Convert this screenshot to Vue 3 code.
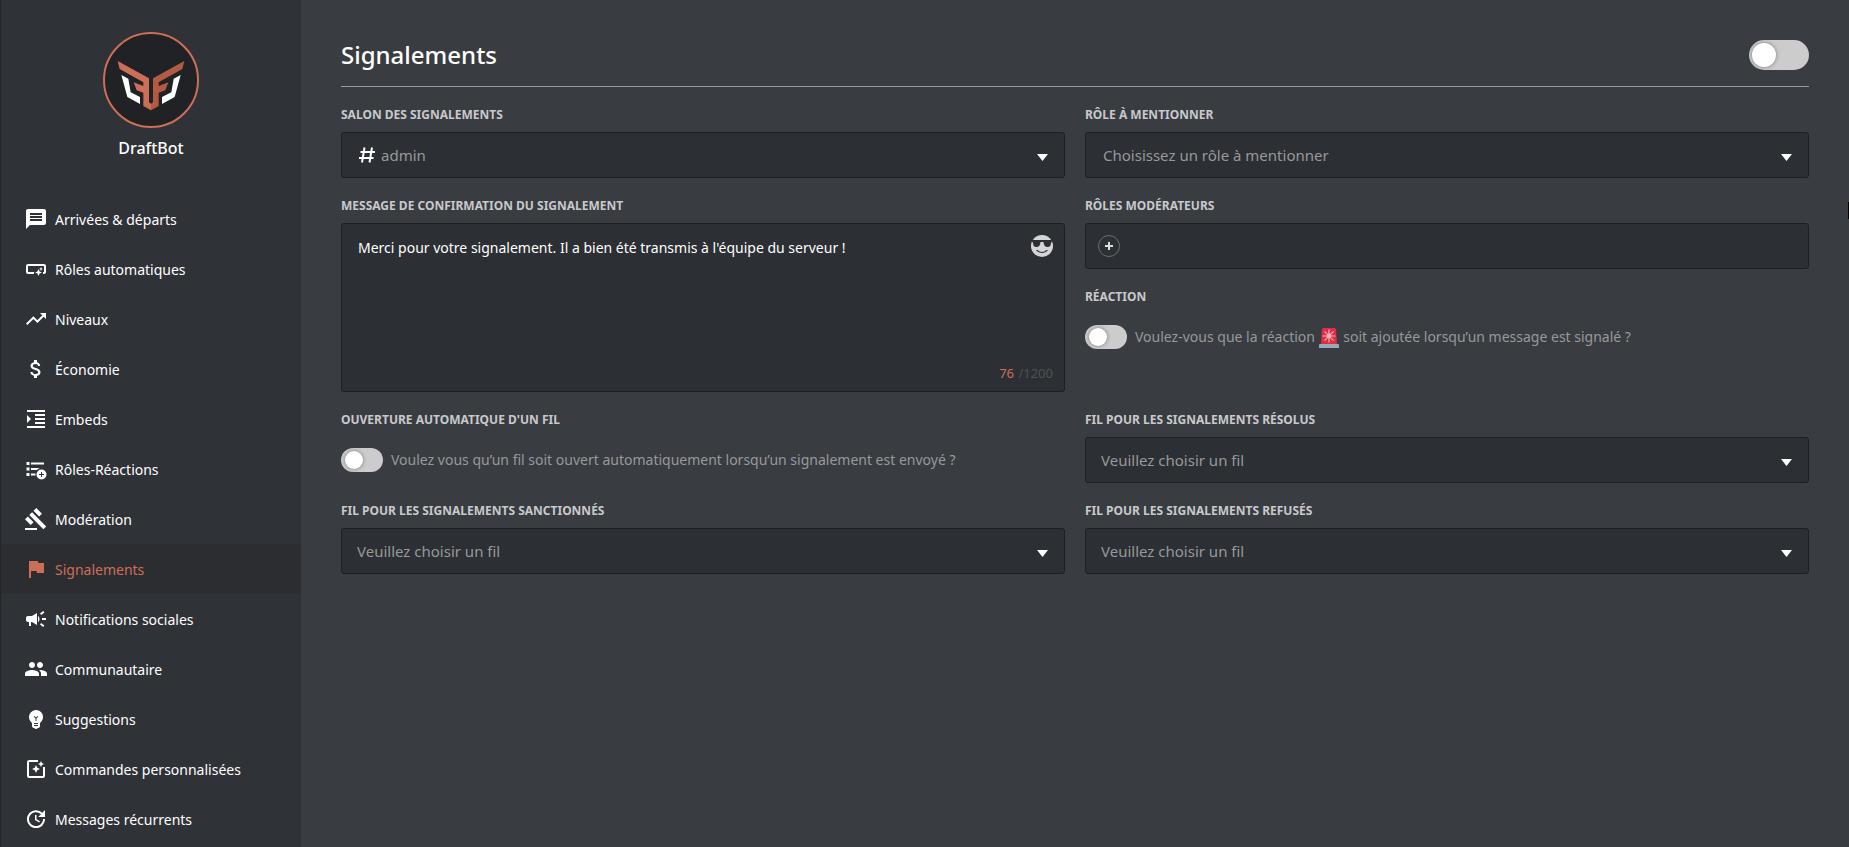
<template>
  <div class="layout">
    <aside class="sidebar">
      <div class="brand">
        <svg class="brand-logo" viewBox="0 0 288 288" aria-hidden="true">
          <circle cx="144" cy="144" r="141" fill="#202225" stroke="#cd6e57" stroke-width="6" />
          <path fill="#cd6e57" d="M44 87 138 139V211L144 215V235L121 222V182L101 175 92 151 121 162V151L50 111z" />
          <path fill="#b35a43" d="M244 87 150 139V211L144 215V235L167 222V182L187 175 196 151 167 162V151L238 111z" />
          <path fill="#ffffff" d="M55 129 76 140 83 181 111 195V216L73 195zM233 129 212 140 205 181 177 195V216L215 195z" />
        </svg>
        <span class="brand-name">DraftBot</span>
      </div>
      <nav>
        <a
          v-for="item in menu"
          :key="item.label"
          href="#"
          class="menu-item"
          :class="{ active: item.label === current }"
          @click.prevent="current = item.label"
        >
          <svg class="menu-icon" viewBox="0 0 24 24" aria-hidden="true">
            <path :d="item.icon" fill-rule="evenodd" />
          </svg>
          <span>{{ item.label }}</span>
        </a>
      </nav>
    </aside>

    <main class="content">
      <header class="header">
        <h1 class="title">Signalements</h1>
        <input v-model="enabled" type="checkbox" class="switch large" aria-label="Activer les signalements" />
      </header>

      <form class="form" @submit.prevent>
        <div class="field">
          <label class="label" for="channel">Salon des signalements</label>
          <div class="select-box">
            <svg class="hash" viewBox="0 0 16 16" aria-hidden="true">
              <path d="M5.5 0.5 3 15.5M13 0.5 10.5 15.5M1.5 5H16M0 11H14.5" />
            </svg>
            <select id="channel" v-model="channel" class="select with-icon">
              <option value="admin">admin</option>
            </select>
          </div>
        </div>

        <div class="field">
          <label class="label" for="mention">Rôle à mentionner</label>
          <div class="select-box">
            <select id="mention" v-model="mention" class="select wide">
              <option value="">Choisissez un rôle à mentionner</option>
            </select>
          </div>
        </div>

        <div class="field">
          <label class="label" for="message">Message de confirmation du signalement</label>
          <div class="message-box">
            <textarea id="message" v-model="message" class="message" maxlength="1200"></textarea>
            <button type="button" class="emoji-button" aria-label="Ajouter un emoji">
              <svg viewBox="0 0 22 22" aria-hidden="true">
                <circle cx="11" cy="11" r="11" fill="#d4d5d6" />
                <path fill="#2c2f33" d="M1 5H21V7L20 7.5C20 10.5 19 12 16.5 12 14 12 12.8 10.5 12.5 7H9.5C9.2 10.5 8 12 5.5 12 3 12 2 10.5 2 7.5L1 7z" />
                <path fill="none" stroke="#2c2f33" stroke-width="1.2" stroke-linecap="round" d="M6 15.5Q11 19.5 16 15.5" />
              </svg>
            </button>
            <p class="counter"><span class="count">{{ count }}</span> /1200</p>
          </div>
        </div>

        <div class="stack">
          <div class="field">
            <span class="label">Rôles modérateurs</span>
            <div class="roles-box">
              <button type="button" class="add-button" aria-label="Ajouter un rôle">
                <svg viewBox="0 0 8 8" aria-hidden="true"><path d="M4 0V8M0 4H8" /></svg>
              </button>
            </div>
          </div>
          <div class="field">
            <span class="label">Réaction</span>
            <div class="switch-row">
              <input id="reaction" v-model="reaction" type="checkbox" class="switch" />
              <label for="reaction">
                Voulez-vous que la réaction
                <svg class="siren" viewBox="0 0 20 20" role="img" aria-label="gyrophare">
                  <path fill="#dd2e44" d="M2 17 3 1.5Q3.1 0 4.5 0H15.5Q16.900 0 17 1.5L18 17z" />
                  <path stroke="#f4abba" stroke-width="1.2" d="M10 1.5V14.5M3.5 8H16.5M5.400 3.400 14.6 12.6M14.6 3.400 5.400 12.6" />
                  <circle cx="10" cy="8" r="2.4" fill="#f4abba" />
                  <path fill="#99aab5" d="M0 17Q0 16 1 16H19Q20 16 20 17V20H0z" />
                </svg>
                soit ajoutée lorsqu’un message est signalé ?
              </label>
            </div>
          </div>
        </div>

        <div class="field">
          <span class="label">Ouverture automatique d'un fil</span>
          <div class="switch-row">
            <input id="thread" v-model="autoThread" type="checkbox" class="switch" />
            <label for="thread">Voulez vous qu’un fil soit ouvert automatiquement lorsqu’un signalement est envoyé ?</label>
          </div>
        </div>

        <div v-for="thread in threads" :key="thread.id" class="field">
          <label class="label" :for="thread.id">{{ thread.label }}</label>
          <div class="select-box">
            <select :id="thread.id" v-model="thread.value" class="select">
              <option value="">Veuillez choisir un fil</option>
            </select>
          </div>
        </div>
      </form>
    </main>
    <span class="edge-mark"></span>
  </div>
</template>

<script setup>
import { computed, ref } from 'vue'

const current = ref('Signalements')
const enabled = ref(false)
const channel = ref('admin')
const mention = ref('')
const message = ref("Merci pour votre signalement. Il a bien été transmis à l'équipe du serveur !")
const reaction = ref(false)
const autoThread = ref(false)

const count = computed(() => message.value.length)

const threads = ref([
  { id: 'resolved', label: 'Fil pour les signalements résolus', value: '' },
  { id: 'sanctioned', label: 'Fil pour les signalements sanctionnés', value: '' },
  { id: 'refused', label: 'Fil pour les signalements refusés', value: '' },
])

const menu = [
  {
    label: 'Arrivées & départs',
    icon: 'M20 2H4c-1.1 0-1.99.9-1.99 2L2 22l4-4h14c1.1 0 2-.9 2-2V4c0-1.1-.9-2-2-2zm-2 12H6v-2h12v2zm0-3H6V9h12v2zm0-3H6V6h12v2z',
  },
  {
    label: 'Rôles automatiques',
    icon: 'M22 9v6c0 1.1-.9 2-2 2h-1v-2h1V9H4v6h6v2H4c-1.1 0-2-.9-2-2V9c0-1.1.9-2 2-2h16c1.1 0 2 .9 2 2zm-7.5 10l1.09-2.41L18 15.5l-2.41-1.09L14.5 12l-1.09 2.41L11 15.5l2.41 1.09L14.5 19zm2.5-5l.62-1.38L19 12l-1.38-.62L17 10l-.62 1.38L15 12l1.38.62L17 14z',
  },
  {
    label: 'Niveaux',
    icon: 'M16 6l2.29 2.29-4.88 4.88-4-4L2 16.59 3.41 18l6-6 4 4 6.3-6.29L22 12V6z',
  },
  {
    label: 'Économie',
    icon: 'M11.8 10.9c-2.27-.59-3-1.2-3-2.15 0-1.09 1.01-1.85 2.7-1.85 1.78 0 2.44.85 2.5 2.1h2.21c-.07-1.72-1.12-3.3-3.21-3.81V3h-3v2.16c-1.94.42-3.5 1.68-3.5 3.61 0 2.31 1.91 3.46 4.7 4.13 2.5.6 3 1.48 3 2.41 0 .69-.49 1.79-2.7 1.79-2.06 0-2.87-.92-2.98-2.1h-2.2c.12 2.19 1.76 3.42 3.68 3.83V21h3v-2.15c1.95-.37 3.5-1.5 3.5-3.55 0-2.84-2.43-3.81-4.7-4.4z',
  },
  {
    label: 'Embeds',
    icon: 'M3 21h18v-2H3v2zM3 8v8l4-4-4-4zm8 9h10v-2H11v2zM3 3v2h18V3H3zm8 6h10V7H11v2zm0 4h10v-2H11v2z',
  },
  {
    label: 'Rôles-Réactions',
    icon: 'M2.5 5h3v3h-3zM7 5.5h13v2H7zM2.5 10.5h3v3h-3zM7 11h9a6 6 0 0 0-3 2H7zM2.5 16h3v3h-3zM7 16.5h4.5v2H7zM17.5 12.5a5 5 0 1 1 0 10a5 5 0 1 1 0-10zM17 15v2h-2v1h2v2h1v-2h2v-1h-2v-2z',
  },
  {
    label: 'Modération',
    icon: 'M1 21h12v2H1zM5.245 8.07l2.83-2.827 14.14 14.142-2.828 2.828zM12.317 1l5.657 5.656-2.83 2.83-5.654-5.66zM3.825 9.485l5.657 5.657-2.828 2.828-5.657-5.657z',
  },
  {
    label: 'Signalements',
    icon: 'M14.4 6L14 4H5v17h2v-7h5.6l.4 2h7V6z',
  },
  {
    label: 'Notifications sociales',
    icon: 'M18 11v2h4v-2h-4zm-2 6.61c.96.71 2.21 1.65 3.2 2.39.4-.53.8-1.07 1.2-1.6-.99-.74-2.24-1.68-3.2-2.4-.4.54-.8 1.08-1.2 1.61zM20.4 5.6c-.4-.53-.8-1.07-1.2-1.6-.99.74-2.24 1.68-3.2 2.4.4.53.8 1.07 1.2 1.6.96-.72 2.21-1.65 3.2-2.4zM4 9c-1.1 0-2 .9-2 2v2c0 1.1.9 2 2 2h1v4h2v-4h1l5 3V6L8 9H4zm11.5 3c0-1.33-.58-2.53-1.5-3.35v6.69c.92-.81 1.5-2.01 1.5-3.34z',
  },
  {
    label: 'Communautaire',
    icon: 'M16 11c1.66 0 2.99-1.34 2.99-3S17.66 5 16 5c-1.66 0-3 1.34-3 3s1.34 3 3 3zm-8 0c1.66 0 2.99-1.34 2.99-3S9.66 5 8 5C6.34 5 5 6.34 5 8s1.34 3 3 3zm0 2c-2.33 0-7 1.17-7 3.5V19h14v-2.5c0-2.33-4.67-3.5-7-3.5zm8 0c-.29 0-.62.02-.97.05 1.16.84 1.97 1.97 1.97 3.45V19h6v-2.5c0-2.33-4.67-3.5-7-3.5z',
  },
  {
    label: 'Suggestions',
    icon: 'M12 3c-.46 0-.93.04-1.4.14C7.84 3.67 5.64 5.9 5.12 8.66c-.48 2.61.48 5.01 2.22 6.56.43.38.66.91.66 1.47V19c0 1.1.9 2 2 2h.28c.35.6.98 1 1.72 1s1.38-.4 1.72-1H14c1.1 0 2-.9 2-2v-2.31c0-.55.22-1.09.64-1.46C18.09 13.95 19 12.08 19 10c0-3.87-3.13-7-7-7zm2 16h-4v-1h4v1zm0-2h-4v-1h4v1zm-1.5-5.59V14h-1v-2.59L9.67 9.59l.71-.71L12 10.5l1.62-1.62.71.71-1.83 1.82z',
  },
  {
    label: 'Commandes personnalisées',
    icon: 'M19.02 10v9H5V5h9V3H5.02c-1.1 0-2 .9-2 2v14c0 1.1.9 2 2 2H19c1.1 0 2-.9 2-2v-9h-1.98zM17 10l.94-2.06L20 7l-2.06-.94L17 4l-.94 2.06L14 7l2.06.94zM13.25 10.75L12 8l-1.25 2.75L8 12l2.75 1.25L12 16l1.25-2.75L16 12z',
  },
  {
    label: 'Messages récurrents',
    icon: 'M21 10.12h-6.78l2.74-2.82c-2.73-2.7-7.15-2.8-9.88-.1-2.73 2.71-2.73 7.08 0 9.79s7.15 2.71 9.88 0C18.32 15.65 19 14.08 19 12.1h2c0 1.98-.88 4.55-2.64 6.29-3.51 3.48-9.21 3.48-12.72 0-3.5-3.47-3.53-9.11-.02-12.58s9.14-3.47 12.65 0L21 3v7.12zM12.5 8v4.25l3.5 2.08-.72 1.21L11 13V8h1.5z',
  },
]
</script>

<style>
body {
  margin: 0;
  background-color: #393c41;
}
</style>

<style scoped>
.layout {
  position: relative;
  display: flex;
  min-height: 100vh;
  box-sizing: border-box;
  font-family: 'Noto Sans', 'Open Sans', sans-serif;
  font-size: 14px;
  color: #ffffff;
}

.sidebar {
  flex: 0 0 300px;
  background-color: #2f3237;
  border-left: 1px solid #242629;
}

.brand {
  display: flex;
  flex-direction: column;
  align-items: center;
  gap: 8px;
  padding: 32px 0 34px;
}

.brand-logo {
  width: 96px;
  height: 96px;
}

.brand-name {
  font-size: 16px;
  line-height: 24px;
  font-weight: 500;
}

.menu-item {
  display: flex;
  align-items: center;
  gap: 7px;
  height: 50px;
  padding-left: 23px;
  color: #ffffff;
  text-decoration: none;
}

.menu-item.active {
  background-color: #2c2d31;
  color: #cd6e57;
}

.menu-icon {
  width: 24px;
  height: 24px;
  fill: currentColor;
}

.content {
  flex: 1;
  min-width: 0;
  padding: 24px 40px;
}

.header {
  display: flex;
  align-items: center;
  justify-content: space-between;
  height: 62px;
  border-bottom: 1px solid #989b9e;
}

.title {
  margin: 0;
  font-size: 24px;
  line-height: 32px;
  font-weight: 500;
}

.form {
  display: grid;
  grid-template-columns: 1fr 1fr;
  gap: 20px;
  padding-top: 20px;
}

.stack {
  display: flex;
  flex-direction: column;
  gap: 20px;
}

.label {
  display: block;
  margin-bottom: 9px;
  font-size: 12px;
  line-height: 16px;
  font-weight: 700;
  text-transform: uppercase;
  color: #c8c9cb;
}

.select-box {
  position: relative;
}

/* Flèche du menu déroulant */
.select-box::after {
  content: '';
  position: absolute;
  top: 22px;
  right: 17px;
  width: 11px;
  height: 7px;
  background-color: #ffffff;
  clip-path: polygon(0 0, 100% 0, 50% 100%);
  pointer-events: none;
}

.select {
  display: block;
  width: 100%;
  height: 46px;
  padding: 0 40px 0 15px;
  border: 1px solid #1e1f22;
  border-radius: 3px;
  background-color: #2c2f33;
  color: #97999c;
  font-family: inherit;
  font-size: 15px;
  appearance: none;
  outline: none;
}

.select.wide {
  padding-left: 17px;
}

.select.with-icon {
  padding-left: 39px;
}

.hash {
  position: absolute;
  top: 15px;
  left: 18px;
  width: 16px;
  height: 16px;
  fill: none;
  stroke: #ffffff;
  stroke-width: 2;
  pointer-events: none;
}

.message-box {
  position: relative;
}

.message {
  display: block;
  width: 100%;
  height: 169px;
  padding: 14px 50px 30px 16px;
  border: 1px solid #1e1f22;
  border-radius: 3px;
  box-sizing: border-box;
  background-color: #2c2f33;
  color: #ffffff;
  font-family: inherit;
  font-size: 14px;
  line-height: 20px;
  resize: none;
  outline: none;
}

.emoji-button {
  position: absolute;
  top: 12px;
  right: 12px;
  width: 22px;
  height: 22px;
  padding: 0;
  border: none;
  background: none;
  cursor: pointer;
}

.emoji-button svg {
  display: block;
}

.counter {
  position: absolute;
  right: 12px;
  bottom: 10px;
  margin: 0;
  font-size: 13px;
  line-height: 18px;
  color: #505357;
}

.count {
  margin-right: 1px;
  color: #cd6e57;
}

.roles-box {
  display: flex;
  align-items: center;
  height: 46px;
  padding: 0 12px;
  border: 1px solid #1e1f22;
  border-radius: 3px;
  box-sizing: border-box;
  background-color: #2c2f33;
}

.add-button {
  display: flex;
  align-items: center;
  justify-content: center;
  width: 22px;
  height: 22px;
  padding: 0;
  border: 1px solid #6b6d70;
  border-radius: 50%;
  background: none;
  cursor: pointer;
}

.add-button svg {
  width: 8px;
  height: 8px;
  stroke: #dcddde;
  stroke-width: 2;
}

.switch-row {
  display: flex;
  align-items: center;
  gap: 8px;
  min-height: 46px;
  line-height: 24px;
  color: #97999c;
}

.switch {
  display: flex;
  align-items: center;
  flex-shrink: 0;
  width: 42px;
  height: 24px;
  margin: 0;
  padding: 0 4px;
  border-radius: 12px;
  box-sizing: border-box;
  background-color: #cccccc;
  appearance: none;
  cursor: pointer;
}

.switch::before {
  content: '';
  width: 18px;
  height: 18px;
  border-radius: 50%;
  background-color: #ffffff;
  box-shadow: 0 0 4px rgba(0, 0, 0, 0.4);
}

.switch:checked {
  justify-content: flex-end;
  background-color: #cd6e57;
}

.switch.large {
  width: 60px;
  height: 30px;
  padding: 0 3px;
  border-radius: 15px;
}

.switch.large::before {
  width: 24px;
  height: 24px;
}

.siren {
  width: 20px;
  height: 20px;
  margin-right: 1px;
  vertical-align: middle;
}

.edge-mark {
  position: absolute;
  top: 202px;
  right: 0;
  width: 1px;
  height: 17px;
  background-color: #000000;
}
</style>
